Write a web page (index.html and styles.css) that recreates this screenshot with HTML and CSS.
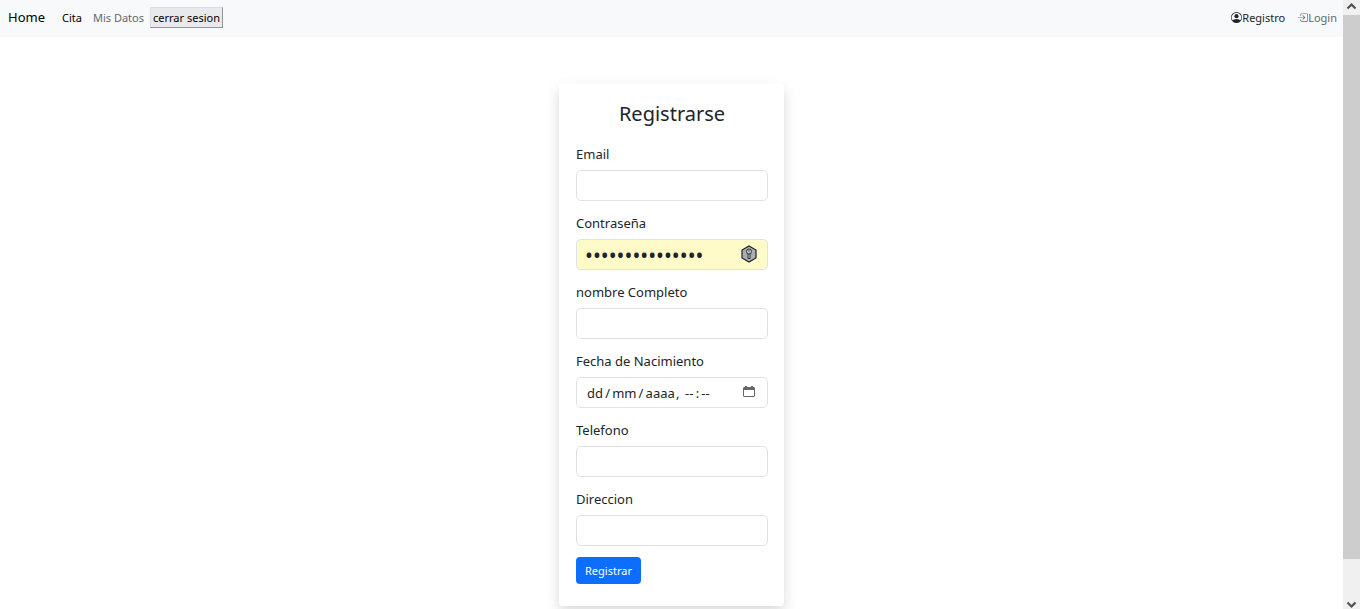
FILE: index.html
```html
<!DOCTYPE html>
<html lang="es">
<head>
<meta charset="utf-8">
<title>Registrarse</title>
<link rel="stylesheet" href="styles.css">
</head>
<body>
<div class="window">
  <div class="page">
    <nav class="navbar">
      <a class="brand" href="#">Home</a>
      <div class="links">
        <a class="link active" href="#">Cita</a>
        <a class="link" href="#">Mis Datos</a>
        <button class="logout" type="button">cerrar sesion</button>
      </div>
      <div class="account">
        <a class="link dark" href="#"><svg class="icon" viewBox="0 0 16 16" fill="currentColor"><path d="M11 6a3 3 0 1 1-6 0 3 3 0 0 1 6 0z"/><path fill-rule="evenodd" d="M0 8a8 8 0 1 1 16 0A8 8 0 0 1 0 8zm8-7a7 7 0 0 0-5.468 11.37C3.242 11.226 4.805 10 8 10s4.757 1.225 5.468 2.37A7 7 0 0 0 8 1z"/></svg>Registro</a>
        <a class="link" href="#"><svg class="icon" viewBox="0 0 16 16" fill="currentColor"><path fill-rule="evenodd" d="M6 3.5a.5.5 0 0 1 .5-.5h8a.5.5 0 0 1 .5.5v9a.5.5 0 0 1-.5.5h-8a.5.5 0 0 1-.5-.5v-2a.5.5 0 0 0-1 0v2A1.500 1.500 0 0 0 6.500 14h8a1.500 1.500 0 0 0 1.500-1.500v-9A1.500 1.500 0 0 0 14.500 2h-8A1.500 1.500 0 0 0 5 3.500v2a.5.5 0 0 0 1 0v-2z"/><path fill-rule="evenodd" d="M11.854 8.354a.5.5 0 0 0 0-.708l-3-3a.5.5 0 1 0-.708.708L10.293 7.500H1.500a.5.5 0 0 0 0 1h8.793l-2.147 2.146a.5.5 0 0 0 .708.708l3-3z"/></svg>Login</a>
      </div>
    </nav>
    <main class="content">
      <form class="card">
        <h1 class="title">Registrarse</h1>
        <div class="fields">
          <div class="field">
            <label class="label" for="email">Email</label>
            <input class="input" id="email" type="email">
          </div>
          <div class="field">
            <label class="label" for="password">Contraseña</label>
            <div class="control">
              <input class="input filled" id="password" type="password" value="contrasena12345">
              <svg class="adorn key" viewBox="0 0 18 18"><path d="M9 1l7 4v8l-7 4-7-4V5z" fill="#a9adb8" stroke="#202226" stroke-width="1.200"/><path d="M8 8.500h2v5H8z" fill="#c9ccd2" stroke="#202226" stroke-width=".9"/><circle cx="9" cy="6.500" r="2.500" fill="#c9ccd2" stroke="#202226" stroke-width=".9"/><circle cx="9" cy="6" r=".7" fill="#202226"/></svg>
            </div>
          </div>
          <div class="field">
            <label class="label" for="name">nombre Completo</label>
            <input class="input" id="name" type="text">
          </div>
          <div class="field">
            <label class="label" for="birth">Fecha de Nacimiento</label>
            <div class="control">
              <input class="input date" id="birth" type="text" value="dd&#8201;/&#8201;mm&#8201;/&#8201;aaaa&#8202;,&#8201; --&#8201;:&#8201;--">
              <svg class="adorn calendar" viewBox="0 0 12 12"><path d="M2 0h2v1h4V0h2v1h1l1 1v8l-1 1H1l-1-1V2l1-1h1zM1 4v6h10V4z" fill="#65686b" fill-rule="evenodd"/></svg>
            </div>
          </div>
          <div class="field">
            <label class="label" for="phone">Telefono</label>
            <input class="input" id="phone" type="tel">
          </div>
          <div class="field">
            <label class="label" for="address">Direccion</label>
            <input class="input" id="address" type="text">
          </div>
        </div>
        <button class="submit" type="submit">Registrar</button>
      </form>
    </main>
  </div>
  <div class="scrollbar" aria-hidden="true">
    <svg class="arrow" viewBox="0 0 17 15"><path d="M4.500 8.500l4-4 4 4" fill="none" stroke="#505050" stroke-width="2.200"/></svg>
    <div class="track"><div class="thumb"></div></div>
    <svg class="arrow" viewBox="0 0 17 15"><path d="M4.500 8.500l4 4 4-4" fill="none" stroke="#505050" stroke-width="2.200"/></svg>
  </div>
</div>
</body>
</html>
```
FILE: styles.css
```css
* {
  box-sizing: border-box;
}

body {
  margin: 0;
  background: #fff;
  color: #212529;
  font-family: "Noto Sans", "Open Sans", sans-serif;
  font-size: 13px;
  line-height: 21px;
}

.window {
  display: flex;
  height: 100vh;
  overflow: hidden;
}

.page {
  flex: 1;
  min-width: 0;
}

.navbar {
  display: flex;
  align-items: center;
  padding: 7px 6px 9px 8px;
  background: #f8f9fa;
  font-size: 11px;
}

.brand {
  margin-right: 17px;
  color: #000;
  font-size: 13px;
  text-decoration: none;
}

.links {
  display: flex;
  align-items: center;
}

.link {
  display: flex;
  align-items: center;
  color: #65686b;
  text-decoration: none;
}

.active {
  margin-right: 11px;
  color: #000;
}

.dark {
  color: #212529;
}

.logout {
  margin-left: 6px;
  padding: 0 2px;
  border: 1px solid;
  border-color: #dcdcdc #949494 #949494 #dcdcdc;
  background: #e9e9ed;
  color: #000;
  font: inherit;
  line-height: 19px;
}

.account {
  display: flex;
  gap: 12px;
  margin-left: auto;
}

.icon {
  width: 11px;
  height: 11px;
}

.content {
  display: flex;
  justify-content: center;
  padding-top: 46px;
}

.card {
  width: 225px;
  padding: 17px 16px 22px 17px;
  border-radius: 4px;
  background: #fff;
  box-shadow: 0 6px 14px rgba(0, 0, 0, 0.15);
}

.title {
  margin: 0 0 16px;
  font-size: 20px;
  font-weight: 400;
  line-height: 28px;
  text-align: center;
}

.fields {
  display: grid;
  gap: 12px;
  margin-bottom: 11px;
}

.label {
  display: block;
  margin-bottom: 5px;
}

.control {
  display: flex;
  position: relative;
}

.input {
  display: block;
  width: 100%;
  height: 31px;
  padding: 4px 9px;
  border: 1px solid #dee2e6;
  border-radius: 5px;
  background: #fff;
  color: #212529;
  font: inherit;
}

.filled {
  padding-left: 8px;
  background: #fffbc8;
  font-size: 21px;
}

.date {
  padding-left: 10px;
}

.adorn {
  position: absolute;
}

.key {
  top: 6px;
  right: 10px;
  width: 18px;
  height: 18px;
}

.calendar {
  top: 9px;
  right: 13px;
  width: 12px;
  height: 12px;
}

.submit {
  display: block;
  padding: 3px 9px;
  border: 0;
  border-radius: 4px;
  background: #0d6efd;
  color: #fff;
  font: inherit;
  font-size: 11px;
  line-height: 21px;
}

.scrollbar {
  display: flex;
  flex-direction: column;
  width: 17px;
  background: #f0f0f0;
}

.arrow {
  width: 17px;
  height: 15px;
}

.track {
  flex: 1;
}

.thumb {
  height: 94%;
  background: #cdcdcd;
}
```
